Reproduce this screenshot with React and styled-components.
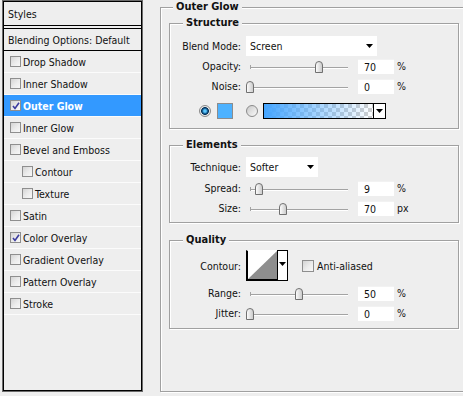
import React from 'react';
import styled, { createGlobalStyle } from 'styled-components';

const GlobalStyle = createGlobalStyle`
  html, body {
    margin: 0;
    padding: 0;
    background: #eeeeee;
  }
  body {
    font-family: 'DejaVu Sans Condensed', 'Liberation Sans', sans-serif;
    font-size: 10.5px;
    color: #111;
  }
`;

const Window = styled.div`
  display: flex;
  align-items: flex-start;
  width: 463px;
  height: 396px;
  overflow: hidden;
  background: #eeeeee;
`;

/* ---------- left: layer style list ---------- */

const StylesPanel = styled.div`
  box-sizing: border-box;
  flex: none;
  width: 139px;
  height: 390px;
  margin: 1px 0 0 3px;
  border: 1px solid #000;
  box-shadow: 0 0 0 1px #6b6b6b;
  display: flex;
  flex-direction: column;
`;

const PanelHeader = styled.div`
  display: flex;
  align-items: center;
  height: 23px;
  padding-left: 4px;
  border-bottom: 1px solid #000;
`;

const BlendingRow = styled.div`
  display: flex;
  align-items: center;
  height: 21px;
  margin-top: 2px;
  padding-left: 4px;
  border-top: 1px solid #000;
  border-bottom: 1px solid #000;
`;

const StyleRow = styled.div`
  box-sizing: border-box;
  display: flex;
  align-items: center;
  gap: 2px;
  height: 22px;
  padding-left: ${(p) => (p.$indent ? 18 : 6)}px;
  border-bottom: 1px solid #fbfbfb;
  background: ${(p) => (p.$selected ? '#3399ff' : 'transparent')};
  color: ${(p) => (p.$selected ? '#fff' : '#111')};
  font-weight: ${(p) => (p.$selected ? 'bold' : 'normal')};
`;

const CheckBox = styled.span`
  box-sizing: border-box;
  flex: none;
  display: inline-flex;
  align-items: center;
  justify-content: center;
  width: ${(p) => p.$size || 11}px;
  height: ${(p) => p.$size || 11}px;
  border: 1px solid #8e8e8e;
  background: linear-gradient(135deg, #d4d4d4 0%, #ececec 55%, #f8f8f8 100%);
`;

function Check({ checked, size }) {
  return (
    <CheckBox $size={size}>
      {checked && (
        <svg width="8" height="8" viewBox="0 0 8 8">
          <path d="M1 4 L3 6.5 L7 0.8" fill="none" stroke="#3b3b9e" strokeWidth="1.6" />
        </svg>
      )}
    </CheckBox>
  );
}

const styleItems = [
  { name: 'Drop Shadow' },
  { name: 'Inner Shadow' },
  { name: 'Outer Glow', checked: true, selected: true },
  { name: 'Inner Glow' },
  { name: 'Bevel and Emboss' },
  { name: 'Contour', indent: true },
  { name: 'Texture', indent: true },
  { name: 'Satin' },
  { name: 'Color Overlay', checked: true },
  { name: 'Gradient Overlay' },
  { name: 'Pattern Overlay' },
  { name: 'Stroke' },
];

/* ---------- right: options ---------- */

const OptionsGroup = styled.fieldset`
  box-sizing: border-box;
  flex: none;
  width: 320px;
  height: 392px;
  min-width: 0;
  margin: 0 0 0 18px;
  padding: 0;
  border: 1px solid #a0a0a0;
  box-shadow: inset 1px 1px 0 #fff, 1px 1px 0 #fff;
`;

const Legend = styled.legend`
  margin-left: ${(p) => p.$offset}px;
  padding: 0 3px;
  line-height: 14px;
  font-size: 11px;
  font-weight: bold;
  color: #111;
  background: #eeeeee;
`;

const SubGroup = styled.fieldset`
  box-sizing: border-box;
  width: 290px;
  min-width: 0;
  margin: ${(p) => p.$top}px 0 0 8px;
  padding: ${(p) => p.$pad};
  border: 1px solid #a0a0a0;
  box-shadow: inset 1px 1px 0 #fff, 1px 1px 0 #fff;
`;

const Row = styled.div`
  display: flex;
  align-items: center;
  height: ${(p) => p.$h || 20}px;
  margin-top: ${(p) => p.$mt || 0}px;
`;

const Label = styled.span`
  flex: none;
  width: 71px;
  text-align: right;
`;

const SelectBox = styled.div`
  box-sizing: border-box;
  display: flex;
  align-items: center;
  justify-content: space-between;
  width: ${(p) => p.$w}px;
  height: 20px;
  margin-left: 5px;
  padding: 0 4px 0 4px;
  background: #fff;
`;

const DownArrow = () => (
  <svg width="7" height="4" viewBox="0 0 7 4">
    <path d="M0 0 H7 L3.5 4 Z" fill="#000" />
  </svg>
);

function Select({ value, width }) {
  return (
    <SelectBox $w={width}>
      <span>{value}</span>
      <DownArrow />
    </SelectBox>
  );
}

const Track = styled.div`
  position: relative;
  flex: none;
  width: 98px;
  height: 13px;
  margin: 0 10px 0 9px;
  &::before {
    content: '';
    position: absolute;
    left: 0;
    right: 0;
    top: 7px;
    height: 1px;
    background: #a3a3a3;
    box-shadow: 0 1px 0 #fff;
  }
  &::after {
    content: '';
    position: absolute;
    left: 0;
    top: 5px;
    width: 1px;
    height: 4px;
    background: #a3a3a3;
  }
`;

const Thumb = styled.svg`
  position: absolute;
  top: 1px;
  z-index: 1;
`;

const NumberField = styled.div`
  box-sizing: border-box;
  flex: none;
  width: 36px;
  height: 15px;
  padding-left: 6px;
  line-height: 15px;
  background: #fff;
  border-top: 1px solid #f2f2f2;
`;

const Unit = styled.span`
  margin-left: 3px;
`;

function Slider({ pos }) {
  return (
    <Track>
      <Thumb width="8" height="12" viewBox="0 0 8 12" style={{ left: Math.round(pos * 98) - 4 }}>
        <defs>
          <linearGradient id="thumbFill" x1="0" y1="0" x2="1" y2="0">
            <stop offset="0" stopColor="#ffffff" />
            <stop offset="1" stopColor="#c8c8c8" />
          </linearGradient>
        </defs>
        <path d="M0.5 11.5 V4 Q0.5 0.5 4 0.5 Q7.5 0.5 7.5 4 V11.5 Z" fill="url(#thumbFill)" stroke="#707070" />
      </Thumb>
    </Track>
  );
}

function SliderRow({ label, value, unit, pos, mt }) {
  return (
    <Row $mt={mt}>
      <Label>{label}</Label>
      <Slider pos={pos} />
      <NumberField>{value}</NumberField>
      <Unit>{unit}</Unit>
    </Row>
  );
}

const ColorRow = styled(Row)`
  padding-left: 29px;
`;

const Radio = styled.span`
  box-sizing: border-box;
  flex: none;
  width: 12px;
  height: 12px;
  border-radius: 50%;
  border: 1px solid #8a8a8a;
  margin-left: ${(p) => p.$ml || 0}px;
  background: ${(p) =>
    p.$on
      ? 'radial-gradient(circle at 50% 50%, #5cc8ff 0 1.2px, #0b4d80 2.8px, #0a3358 3.6px, #e6e6e6 4.2px)'
      : 'linear-gradient(135deg, #c8c8c8, #fafafa)'};
`;

const Swatch = styled.span`
  box-sizing: border-box;
  flex: none;
  width: 16px;
  height: 16px;
  margin-left: 6px;
  background: #4db2ff;
  border: 1px solid #8c8c8c;
`;

const GradientPicker = styled.div`
  box-sizing: border-box;
  display: flex;
  width: 123px;
  height: 16px;
  margin-left: 5px;
  border: 1px solid #000;
`;

const GradientFill = styled.div`
  flex: 1;
  background:
    linear-gradient(to right, #45a5ff 0%, rgba(77, 170, 255, 0.6) 40%, rgba(77, 170, 255, 0) 100%),
    conic-gradient(#cfcfcf 25%, #fff 0 50%, #cfcfcf 0 75%, #fff 0) 0 0 / 8px 8px;
`;

const DropButton = styled.div`
  flex: none;
  display: flex;
  align-items: center;
  justify-content: center;
  width: 11px;
  border-left: 1px solid #000;
  background: #fff;
`;

const ContourPicker = styled.div`
  box-sizing: border-box;
  display: flex;
  width: 42px;
  height: 31px;
  margin-left: 5px;
`;

const ContourPreview = styled.div`
  box-sizing: border-box;
  flex: none;
  width: 31px;
  height: 31px;
  border-left: 2px solid #000;
  border-bottom: 2px solid #000;
  border-top: 1px solid #fff;
  background: #fff;
  svg {
    display: block;
  }
`;

const ContourDrop = styled.div`
  box-sizing: border-box;
  flex: none;
  display: flex;
  justify-content: center;
  width: 11px;
  padding-top: 11px;
  border: 1px solid #000;
  background: #fff;
`;

const CheckLabel = styled.label`
  display: flex;
  align-items: center;
  gap: 3px;
  margin-left: 14px;
`;

export default function App() {
  return (
    <>
      <GlobalStyle />
      <Window>
        <StylesPanel>
          <PanelHeader>Styles</PanelHeader>
          <BlendingRow>Blending Options: Default</BlendingRow>
          {styleItems.map((item) => (
            <StyleRow key={item.name} $indent={item.indent} $selected={item.selected}>
              <Check checked={item.checked} />
              <span>{item.name}</span>
            </StyleRow>
          ))}
        </StylesPanel>

        <OptionsGroup>
          <Legend $offset={12}>Outer Glow</Legend>

          <SubGroup $top={2} $pad="6px 0 9px 0">
            <Legend $offset={13}>Structure</Legend>
            <Row>
              <Label>Blend Mode:</Label>
              <Select value="Screen" width={131} />
            </Row>
            <SliderRow label="Opacity:" value="70" unit="%" pos={0.7} />
            <SliderRow label="Noise:" value="0" unit="%" pos={0} />
            <ColorRow $h={16} $mt={7}>
              <Radio $on />
              <Swatch />
              <Radio $ml={13} />
              <GradientPicker>
                <GradientFill />
                <DropButton>
                  <DownArrow />
                </DropButton>
              </GradientPicker>
            </ColorRow>
          </SubGroup>

          <SubGroup $top={9} $pad="5px 0 4px 0">
            <Legend $offset={13}>Elements</Legend>
            <Row>
              <Label>Technique:</Label>
              <Select value="Softer" width={72} />
            </Row>
            <SliderRow label="Spread:" value="9" unit="%" pos={0.09} mt={1} />
            <SliderRow label="Size:" value="70" unit="px" pos={0.34} />
          </SubGroup>

          <SubGroup $top={10} $pad="3px 0 5px 0">
            <Legend $offset={13}>Quality</Legend>
            <Row $h={31}>
              <Label>Contour:</Label>
              <ContourPicker>
                <ContourPreview>
                  <svg width="29" height="28" viewBox="0 0 29 28">
                    <path d="M0 28 L29 0 L29 28 Z" fill="#8e8e8e" />
                  </svg>
                </ContourPreview>
                <ContourDrop>
                  <DownArrow />
                </ContourDrop>
              </ContourPicker>
              <CheckLabel>
                <Check size={12} />
                <span>Anti-aliased</span>
              </CheckLabel>
            </Row>
            <SliderRow label="Range:" value="50" unit="%" pos={0.5} mt={2} />
            <SliderRow label="Jitter:" value="0" unit="%" pos={0} />
          </SubGroup>
        </OptionsGroup>
      </Window>
    </>
  );
}
